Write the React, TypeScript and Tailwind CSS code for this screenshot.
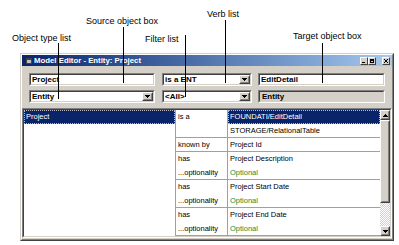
import React from "react";

const FONT = "font-['Liberation_Sans',Arial,sans-serif]";

function Tri({ up }: { up?: boolean }) {
  return (
    <svg width="5" height="3" viewBox="0 0 5 3" shapeRendering="crispEdges" fill="#000">
      {up ? (
        <>
          <rect x="2" y="0" width="1" height="1" />
          <rect x="1" y="1" width="3" height="1" />
          <rect x="0" y="2" width="5" height="1" />
        </>
      ) : (
        <>
          <rect x="0" y="0" width="5" height="1" />
          <rect x="1" y="1" width="3" height="1" />
          <rect x="2" y="2" width="1" height="1" />
        </>
      )}
    </svg>
  );
}

function Raised({ className = "", children }: { className?: string; children?: React.ReactNode }) {
  return (
    <div className={`border border-t-white border-l-white border-b-[#404040] border-r-[#404040] bg-[#d4d0c8] ${className}`}>
      <div className="w-full h-full border border-t-[#d4d0c8] border-l-[#d4d0c8] border-b-[#808080] border-r-[#808080] flex items-center justify-center">
        {children}
      </div>
    </div>
  );
}

function Sunken({
  className = "",
  inner = "bg-white",
  children,
}: {
  className?: string;
  inner?: string;
  children?: React.ReactNode;
}) {
  return (
    <div className={`border border-t-[#808080] border-l-[#808080] border-b-white border-r-white ${className}`}>
      <div className={`w-full h-full border border-t-[#404040] border-l-[#404040] border-b-[#d4d0c8] border-r-[#d4d0c8] flex items-center ${inner}`}>
        {children}
      </div>
    </div>
  );
}

function TitleBtn({ className = "", children }: { className?: string; children?: React.ReactNode }) {
  return (
    <div className={`w-[8px] h-[8px] border border-t-white border-l-white border-b-[#404040] border-r-[#404040] bg-[#d4d0c8] flex items-center justify-center ${className}`}>
      {children}
    </div>
  );
}

function Cell({ children }: { children?: React.ReactNode }) {
  return <div className="h-[14px] flex items-center pl-[2px] leading-none text-black">{children}</div>;
}

const groups: { verb: string[]; target: string[] }[] = [
  { verb: ["known by"], target: ["Project Id"] },
  { verb: ["has", "...optionality"], target: ["Project Description", "Optional"] },
  { verb: ["has", "...optionality"], target: ["Project Start Date", "Optional"] },
  { verb: ["has", "...optionality"], target: ["Project End Date", "Optional"] },
];

export default function App() {
  return (
    <div className={`relative w-[399px] h-[245px] bg-white overflow-hidden pt-[53px] pl-[20px] ${FONT}`}>
      {/* Window */}
      <div className="w-[374px] h-[188px] border border-t-[#d4d0c8] border-l-[#d4d0c8] border-b-[#404040] border-r-[#404040]">
        <div className="w-full h-full border border-t-white border-l-white border-b-[#808080] border-r-[#808080] bg-[#d4d0c8] flex flex-col">
          {/* Title bar */}
          <div className="h-[11px] bg-linear-to-r from-[#0a246a] to-[#a6caf0] flex items-center pl-[4px] pr-[2px]">
            <div className="w-[6px] h-[6px] bg-[#c0c0c0] border border-[#404040] flex flex-col">
              <div className="h-[1px] bg-[#404040]" />
            </div>
            <span className="ml-[2px] text-white font-bold text-[7.8px] leading-none">
              Model Editor - Entity: Project
            </span>
            <div className="ml-auto flex">
              <TitleBtn>
                <div className="w-[3px] h-[1px] bg-black mt-[3px] -ml-[1px]" />
              </TitleBtn>
              <TitleBtn>
                <div className="w-[4px] h-[4px] border border-black border-t-2" />
              </TitleBtn>
              <TitleBtn className="ml-[6px]">
                <svg width="4" height="4" viewBox="0 0 4 4" shapeRendering="crispEdges">
                  <path d="M0 0L4 4M4 0L0 4" stroke="#000" strokeWidth="1" />
                </svg>
              </TitleBtn>
            </div>
          </div>

          {/* Row 1 */}
          <div className="flex mt-[7px] ml-[7px] h-[13px] text-[8px] font-bold leading-none text-black">
            <Sunken className="w-[126px]">
              <span className="pl-[1px]">Project</span>
            </Sunken>
            <Sunken className="ml-[7px] w-[90px]">
              <span className="pl-[1px] flex-1">is a ENT</span>
              <Raised className="w-[11px] h-full">
                <Tri />
              </Raised>
            </Sunken>
            <Sunken className="ml-[6px] w-[127px]">
              <span className="pl-[1px]">EditDetail</span>
            </Sunken>
          </div>

          {/* Row 2 */}
          <div className="flex mt-[4px] ml-[7px] h-[13px] text-[8px] font-bold leading-none text-black">
            <Sunken className="w-[126px]">
              <span className="pl-[1px] flex-1">Entity</span>
              <Raised className="w-[11px] h-full">
                <Tri />
              </Raised>
            </Sunken>
            <Sunken className="ml-[7px] w-[90px]">
              <span className="pl-[1px] flex-1">&lt;All&gt;</span>
              <Raised className="w-[11px] h-full">
                <Tri />
              </Raised>
            </Sunken>
            <Sunken className="ml-[6px] w-[127px]" inner="bg-[#d4d0c8]">
              <span className="pl-[2px]">Entity</span>
            </Sunken>
          </div>

          {/* List */}
          <Sunken className="mt-[5px] h-[130px] w-full" inner="bg-white items-stretch">
            <div className="flex w-full text-[7.5px]">
              {/* object column */}
              <div className="w-[152px] border-r border-[#a0a0a0]">
                <div className="h-[14px] bg-[#0a246a] text-white border border-dotted border-[#b8b8c8] flex items-center pl-[1px] leading-none">
                  Project
                </div>
              </div>
              {/* verb + target */}
              <div className="w-[204px] flex flex-col">
                <div className="flex border-b border-[#a0a0a0]">
                  <div className="w-[52px] border-r border-[#a0a0a0]">
                    <Cell>is a</Cell>
                    <div className="h-[13px]" />
                  </div>
                  <div className="w-[152px]">
                    <div className="h-[14px] bg-[#0a246a] text-white border border-dotted border-[#b8b8c8] flex items-center pl-[1px] leading-none">
                      FOUNDATI/EditDetail
                    </div>
                    <div className="h-[13px] flex items-center pl-[2px] leading-none">STORAGE/RelationalTable</div>
                  </div>
                </div>
                {groups.map((g, i) => (
                  <div key={i} className="flex border-b border-[#a0a0a0]">
                    <div className="w-[52px] border-r border-[#a0a0a0] flex flex-col">
                      {g.verb.map((v, j) => (
                        <div key={j} className={`flex items-center pl-[2px] leading-none ${j === g.verb.length - 1 ? "h-[13px]" : "h-[14px]"}`}>
                          {v}
                        </div>
                      ))}
                    </div>
                    <div className="w-[152px] flex flex-col">
                      {g.target.map((t, j) => (
                        <div
                          key={j}
                          className={`flex items-center pl-[2px] leading-none ${j === g.target.length - 1 ? "h-[13px]" : "h-[14px]"} ${t === "Optional" ? "text-[#1f8a1f]" : "text-black"}`}
                        >
                          {t}
                        </div>
                      ))}
                    </div>
                  </div>
                ))}
              </div>
              {/* scrollbar */}
              <div className="w-[10px] flex flex-col bg-[repeating-conic-gradient(#d4d0c8_0_25%,#ffffff_0_50%)] bg-[length:2px_2px]">
                <Raised className="h-[10px]">
                  <Tri up />
                </Raised>
                <Raised className="h-[83px]" />
                <div className="flex-1" />
                <Raised className="h-[10px]">
                  <Tri />
                </Raised>
              </div>
            </div>
          </Sunken>
        </div>
      </div>

      {/* Annotations (callouts over the window) */}
      <span className="absolute left-[86px] top-[17px] text-[9px] leading-none text-black">Source object box</span>
      <span className="absolute left-[12px] top-[34px] text-[9px] leading-none text-black">Object type list</span>
      <span className="absolute left-[145px] top-[35px] text-[9px] leading-none text-black">Filter list</span>
      <span className="absolute left-[207px] top-[10px] text-[9px] leading-none text-black">Verb list</span>
      <span className="absolute left-[293px] top-[32px] text-[9px] leading-none text-black">Target object box</span>

      <div className="absolute left-[58px] top-[43px] w-[1px] h-[56px] bg-black" />
      <div className="absolute left-[123px] top-[27px] w-[1px] h-[56px] bg-black" />
      <div className="absolute left-[185px] top-[35px] w-[1px] h-[62px] bg-black" />
      <div className="absolute left-[225px] top-[20px] w-[1px] h-[63px] bg-black" />
      <div className="absolute left-[322px] top-[43px] w-[1px] h-[40px] bg-black" />
    </div>
  );
}
